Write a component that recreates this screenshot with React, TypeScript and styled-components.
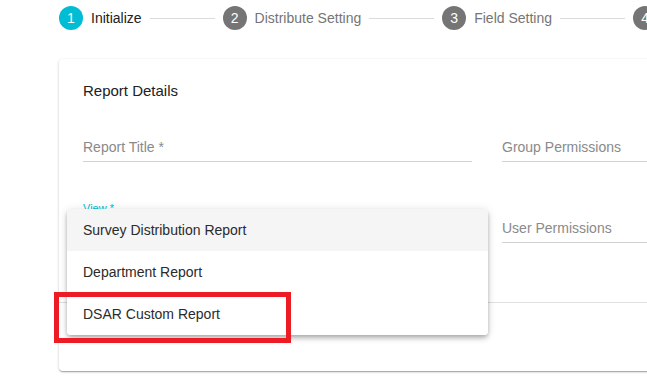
import React from "react";
import styled, { createGlobalStyle } from "styled-components";

const GlobalStyle = createGlobalStyle`
  html, body {
    margin: 0;
    padding: 0;
    background: #fff;
    overflow: hidden;
  }
  body {
    font-family: "Liberation Sans", Arial, sans-serif;
  }
`;

const Page = styled.div`
  position: relative;
  width: 647px;
  height: 380px;
  overflow: hidden;
`;

const Stepper = styled.div`
  display: flex;
  align-items: center;
  height: 36px;
  padding-left: 59px;
  white-space: nowrap;
`;

const Step = styled.div`
  display: flex;
  align-items: center;
  gap: 8px;
  flex-shrink: 0;
`;

const StepCircle = styled.span<{ $active?: boolean }>`
  width: 24px;
  height: 24px;
  border-radius: 50%;
  background: ${p => (p.$active ? "#00bcd4" : "#757575")};
  color: #fff;
  font-size: 14px;
  display: flex;
  align-items: center;
  justify-content: center;
`;

const StepLabel = styled.span<{ $active?: boolean }>`
  font-size: 14px;
  color: ${p => (p.$active ? "#212121" : "#757575")};
`;

const Connector = styled.span`
  width: 65px;
  height: 1px;
  background: #dcdcdc;
  margin: 0 8px;
  flex-shrink: 0;
`;

const Card = styled.div`
  position: relative;
  margin: 23px 0 0 59px;
  width: 856px;
  height: 312px;
  background: #fff;
  border-radius: 4px;
  box-shadow: 0 1px 3px rgba(0, 0, 0, 0.2), 0 1px 1px rgba(0, 0, 0, 0.14),
    0 2px 1px -1px rgba(0, 0, 0, 0.12);
`;

const CardTitle = styled.div`
  padding: 22px 24px 0;
  font-size: 15px;
  line-height: 20px;
  color: #212121;
`;

const Fields = styled.div`
  display: grid;
  grid-template-columns: 389px 389px;
  column-gap: 30px;
  row-gap: 32px;
  padding: 12px 24px 0;
`;

const Field = styled.div`
  position: relative;
  height: 48px;
  display: flex;
  align-items: flex-end;
  border-bottom: 1px solid #d2d2d2;
`;

const Placeholder = styled.span`
  font-size: 14px;
  line-height: 20px;
  padding-bottom: 4px;
  color: #8a8a8a;
`;

const FloatLabel = styled.span`
  position: absolute;
  top: 7px;
  left: 0;
  font-size: 11px;
  line-height: 14px;
  color: #00bcd4;
`;

const Divider = styled.div`
  margin-top: 59px;
  height: 1px;
  background: #e0e0e0;
`;

const Menu = styled.ul`
  position: absolute;
  left: 8px;
  top: 150px;
  width: 421px;
  margin: 0;
  padding: 0;
  list-style: none;
  background: #fff;
  border-radius: 4px;
  overflow: hidden;
  box-shadow: 0 2px 4px -1px rgba(0, 0, 0, 0.2), 0 4px 5px 0 rgba(0, 0, 0, 0.14),
    0 1px 10px 0 rgba(0, 0, 0, 0.12);
`;

const MenuItem = styled.li<{ $selected?: boolean }>`
  height: 42px;
  display: flex;
  align-items: center;
  padding-left: 16px;
  font-size: 14px;
  color: #2b2b2b;
  background: ${p => (p.$selected ? "#f5f5f5" : "#fff")};
`;

const Highlight = styled.div`
  position: absolute;
  left: 54px;
  top: 292px;
  width: 237px;
  height: 51px;
  box-sizing: border-box;
  border: 5px solid #ed1c24;
`;

const steps = ["Initialize", "Distribute Setting", "Field Setting", "Preview"];

const App: React.FC = () => (
  <Page>
    <GlobalStyle />
    <Stepper>
      {steps.map((s, i) => (
        <React.Fragment key={s}>
          {i > 0 && <Connector />}
          <Step>
            <StepCircle $active={i === 0}>{i + 1}</StepCircle>
            <StepLabel $active={i === 0}>{s}</StepLabel>
          </Step>
        </React.Fragment>
      ))}
    </Stepper>
    <Card>
      <CardTitle>Report Details</CardTitle>
      <Fields>
        <Field>
          <Placeholder>Report Title *</Placeholder>
        </Field>
        <Field>
          <Placeholder>Group Permissions</Placeholder>
        </Field>
        <Field>
          <FloatLabel>View *</FloatLabel>
        </Field>
        <Field>
          <Placeholder>User Permissions</Placeholder>
        </Field>
      </Fields>
      <Divider />
      <Menu>
        <MenuItem $selected>Survey Distribution Report</MenuItem>
        <MenuItem>Department Report</MenuItem>
        <MenuItem>DSAR Custom Report</MenuItem>
      </Menu>
    </Card>
    <Highlight />
  </Page>
);

export default App;
